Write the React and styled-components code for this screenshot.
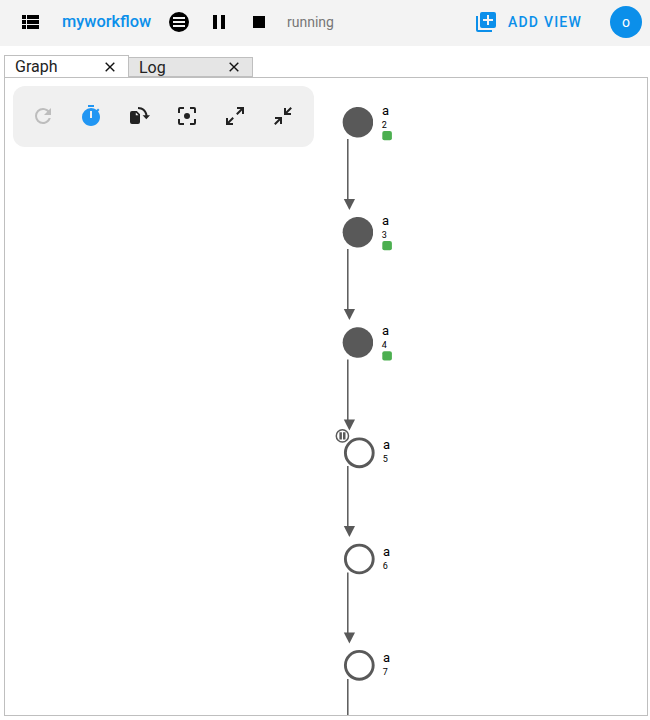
import React from "react";
import styled, { createGlobalStyle } from "styled-components";

const Global = createGlobalStyle`
  * { box-sizing: border-box; }
  body { margin: 0; background: #fff; font-family: Roboto, sans-serif; }
  button { border: 0; padding: 0; background: none; font: inherit; color: inherit; }
`;

const Page = styled.div`
  display: flex;
  flex-direction: column;
  height: 720px;
  width: 650px;
  overflow: hidden;
`;

const Header = styled.header`
  display: flex;
  align-items: center;
  height: 46px;
  padding: 0 8px 2px 18px;
  background: #f3f3f3;
  flex: none;
`;

const Title = styled.h1`
  width: 105px;
  margin: 0 0 0 20px;
  font-size: 16.4px;
  line-height: 24px;
  font-weight: 500;
  color: #0b8fea;
  white-space: nowrap;
`;

const Controls = styled.div`
  display: flex;
  gap: 16px;
`;

const IconButton = styled.button`
  display: flex;
  width: 24px;
  height: 24px;
  color: ${(p) => p.$color || "#000"};
`;

const Status = styled.span`
  margin-left: 16px;
  font-size: 14px;
  line-height: 24px;
  color: #777;
`;

const AddView = styled.button`
  display: flex;
  align-items: center;
  gap: 10px;
  margin-left: auto;
  height: 24px;
  color: #0b8fea;
`;

const AddLabel = styled.span`
  width: 74px;
  font-size: 14px;
  font-weight: 500;
  letter-spacing: 1.2px;
  white-space: nowrap;
`;

const Avatar = styled.div`
  display: flex;
  align-items: center;
  justify-content: center;
  width: 32px;
  height: 32px;
  margin-left: 28px;
  border-radius: 50%;
  background: #0b8fea;
  color: #fff;
  font-size: 14px;
  font-weight: 400;
`;

const Tabs = styled.nav`
  display: flex;
  align-items: flex-end;
  height: 32px;
  margin-left: 4px;
  flex: none;
`;

const CloseIcon = styled.svg`
  display: block;
  width: 12px;
  height: 12px;
  fill: none;
  stroke: #111;
  stroke-width: 1.4;
`;

const Tab = styled.div`
  position: relative;
  z-index: ${(p) => (p.$active ? 1 : 0)};
  display: flex;
  align-items: center;
  justify-content: space-between;
  width: ${(p) => (p.$active ? 125 : 124)}px;
  height: ${(p) => (p.$active ? 23 : 20)}px;
  margin-bottom: ${(p) => (p.$active ? 0 : 1)}px;
  padding: ${(p) => (p.$active ? 0 : 1)}px 12px 0 10px;
  border: 1px solid #bfbfbf;
  border-left-width: ${(p) => (p.$active ? 1 : 0)}px;
  background: ${(p) => (p.$active ? "#fff" : "#e5e5e5")};
  font-size: 16px;
  line-height: 20px;
  color: #222;

  ${CloseIcon} {
    margin-bottom: ${(p) => (p.$active ? 0 : 2)}px;
  }
`;

const Panel = styled.main`
  display: grid;
  width: 644px;
  height: 639px;
  margin: -1px 0 0 4px;
  border: 1px solid #bfbfbf;
  overflow: hidden;
`;

const Toolbar = styled.div`
  grid-area: 1 / 1;
  display: flex;
  align-items: center;
  gap: 24px;
  width: 301px;
  height: 61px;
  margin: 8px 0 0 8px;
  padding: 0 18px 1px;
  border-radius: 12px;
  background: #f0f0f0;
`;

const Graph = styled.svg`
  grid-area: 1 / 1;
  display: block;
  font-family: Roboto, sans-serif;
  fill: #595959;
`;

const paths = {
  list: "M9,5V9H21V5M9,19H21V15H9M9,14H21V10H9M4,9H8V5H4M4,19H8V15H4M4,14H8V10H4V14Z",
  menu: "M12,2A10,10 0 1,0 12,22A10,10 0 1,0 12,2ZM6,7H18V9H6ZM6,11H18V13H6ZM6,15H18V17H6Z",
  pause: "M14,19H18V5H14M6,19H10V5H6V19Z",
  stop: "M18,18H6V6H18V18Z",
  add: "M19,11H15V15H13V11H9V9H13V5H15V9H19M20,2H8A2,2 0 0,0 6,4V16A2,2 0 0,0 8,18H20A2,2 0 0,0 22,16V4A2,2 0 0,0 20,2M4,6H2V20A2,2 0 0,0 4,22H18V20H4V6Z",
  refresh: "M17.65,6.35C16.2,4.9 14.21,4 12,4A8,8 0 0,0 4,12A8,8 0 0,0 12,20C15.73,20 18.84,17.45 19.73,14H17.65C16.83,16.33 14.61,18 12,18A6,6 0 0,1 6,12A6,6 0 0,1 12,6C13.66,6 15.14,6.69 16.22,7.78L13,11H20V4L17.65,6.35Z",
  timer: "M19.03,7.39L20.45,5.97C20,5.46 19.55,5 19.04,4.56L17.62,6C16.07,4.74 14.12,4 12,4A9,9 0 0,0 3,13C3,17.97 7,22 12,22C17,22 21,17.97 21,13C21,10.88 20.26,8.93 19.03,7.39M13,14H11V7H13M15,1H9V3H15V1Z",
  rotate: "M5,7H9.8L13,10.2V18A2,2 0 0,1 11,20H5A2,2 0 0,1 3,18V9A2,2 0 0,1 5,7ZM8.8,8.6V11.3H11.5ZM11,3C16,3 20,6.5 20.5,11.3H23L19.3,15.3L15.6,11.3H18.4C18,7.8 15,5 11,5Z",
  center: "M12,9A3,3 0 0,0 9,12A3,3 0 0,0 12,15A3,3 0 0,0 15,12A3,3 0 0,0 12,9M19,19H15V21H19A2,2 0 0,0 21,19V15H19M19,3H15V5H19V9H21V5A2,2 0 0,0 19,3M5,5H9V3H5A2,2 0 0,0 3,5V9H5M5,15H3V19A2,2 0 0,0 5,21H9V19H5V15Z",
  expand: "M10,21V19H6.41L10.91,14.5L9.5,13.09L5,17.59V14H3V21H10M14.5,10.91L19,6.41V10H21V3H14V5H17.59L13.09,9.5L14.5,10.91Z",
  collapse: "M19.5,3.09L15,7.59V4H13V11H20V9H16.41L20.91,4.5L19.5,3.09M4,13V15H7.59L3.09,19.5L4.5,20.91L9,16.41V20H11V13H4Z",
};

const Icon = ({ name }) => (
  <svg width="24" height="24" viewBox="0 0 24 24">
    <path d={paths[name]} fill="currentColor" fillRule={name === "menu" || name === "rotate" ? "evenodd" : "nonzero"} />
  </svg>
);

const Close = () => (
  <CloseIcon viewBox="0 0 12 12">
    <path d="M1.7 1.7 10.3 10.3M10.3 1.7 1.7 10.3" />
  </CloseIcon>
);

const tools = [
  ["refresh", "#bdbdbd"],
  ["timer", "#2196f3"],
  ["rotate", "#222"],
  ["center", "#222"],
  ["expand", "#222"],
  ["collapse", "#222"],
];

const nodes = [
  { point: 2, y: 122.3, textY: 115, done: true },
  { point: 3, y: 232.3, textY: 225, done: true },
  { point: 4, y: 342.5, textY: 335, done: true },
  { point: 5, y: 452.8, textY: 449, held: true },
  { point: 6, y: 559, textY: 556 },
  { point: 7, y: 665.3, textY: 662 },
];

const edges = [
  [139, 210],
  [249, 320],
  [359.5, 430.5],
  [466, 537],
  [572.5, 643.5],
  [679, 750],
];

const Node = ({ point, y, textY, done, held }) => (
  <g>
    {done ? (
      <path d={`M373 ${y - 2.7}A15.3 15.3 0 1 0 373 ${y + 2.7}Z`} />
    ) : (
      <circle cx="359.3" cy={y} r="13.9" fill="none" stroke="#595959" strokeWidth="2.9" />
    )}
    {held && (
      <g>
        <circle cx="342.4" cy="435.9" r="6.1" fill="#fff" stroke="#595959" strokeWidth="1.5" />
        <path d="M339.4 432.2h2.5v7.4h-2.5zM343 432.2h2.5v7.4H343z" />
      </g>
    )}
    <text x={done ? 382 : 383} y={textY} fontSize="13" fill="#000">a</text>
    <text x={done ? 381.8 : 382.8} y={textY + 13} fontSize="9" fill="#000">{point}</text>
    {done && <rect x="382.3" y={y + 8.7} width="9.6" height="9.3" rx="2" fill="#4caf50" />}
  </g>
);

export default function App() {
  return (
    <Page>
      <Global />
      <Header>
        <IconButton><Icon name="list" /></IconButton>
        <Title>myworkflow</Title>
        <Controls>
          {["menu", "pause", "stop"].map((n) => (
            <IconButton key={n}><Icon name={n} /></IconButton>
          ))}
        </Controls>
        <Status>running</Status>
        <AddView><Icon name="add" /><AddLabel>ADD VIEW</AddLabel></AddView>
        <Avatar>o</Avatar>
      </Header>
      <Tabs>
        <Tab $active>Graph<Close /></Tab>
        <Tab>Log<Close /></Tab>
      </Tabs>
      <Panel>
        <Graph width="642" height="637" viewBox="5 78 642 637">
          {edges.map(([top, tip]) => (
            <g key={top}>
              <path d={`M347.8 ${top}V${tip - 10}`} stroke="#595959" strokeWidth="1.5" />
              <path d={`M343.8 ${tip - 11}H355L349.4 ${tip}Z`} />
            </g>
          ))}
          {nodes.map((n) => <Node key={n.point} {...n} />)}
        </Graph>
        <Toolbar>
          {tools.map(([name, color]) => (
            <IconButton key={name} $color={color}><Icon name={name} /></IconButton>
          ))}
        </Toolbar>
      </Panel>
    </Page>
  );
}
